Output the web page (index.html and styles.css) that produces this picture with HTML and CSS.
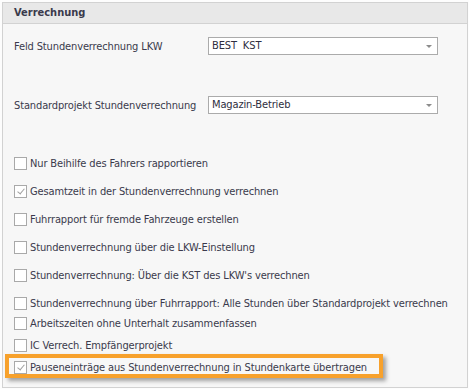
FILE: index.html
```html
<!DOCTYPE html>
<html lang="de">

<head>
    <meta charset="UTF-8">
    <meta name="viewport" content="width=device-width, initial-scale=1.0">
    <title>Verrechnung</title>
    <link rel="stylesheet" href="styles.css">
</head>

<body>
    <div class="panel">
        <div class="panel-header">Verrechnung</div>

        <div class="panel-body">
            <!-- Auswahlfelder -->
            <div class="field first">
                <label>Feld Stundenverrechnung LKW</label>
                <div class="combo">BEST&nbsp; KST<span class="arrow"></span></div>
            </div>
            <div class="field">
                <label>Standardprojekt Stundenverrechnung</label>
                <div class="combo">Magazin-Betrieb<span class="arrow"></span></div>
            </div>

            <!-- Optionen -->
            <div class="checks wide">
                <div class="check"><span class="box"></span>Nur Beihilfe des Fahrers rapportieren</div>
                <div class="check"><span class="box checked"></span>Gesamtzeit in der Stundenverrechnung verrechnen</div>
                <div class="check"><span class="box"></span>Fuhrrapport für fremde Fahrzeuge erstellen</div>
                <div class="check"><span class="box"></span>Stundenverrechnung über die LKW-Einstellung</div>
                <div class="check"><span class="box"></span>Stundenverrechnung: Über die KST des LKW's verrechnen</div>
                <div class="check"><span class="box"></span>Stundenverrechnung über Fuhrrapport: Alle Stunden über Standardprojekt verrechnen</div>
            </div>
            <div class="checks tight">
                <div class="check"><span class="box"></span>Arbeitszeiten ohne Unterhalt zusammenfassen</div>
                <div class="check"><span class="box"></span>IC Verrech. Empfängerprojekt</div>
                <div class="check highlight"><span class="box checked"></span>Pauseneinträge aus Stundenverrechnung in Stundenkarte übertragen</div>
            </div>
        </div>
    </div>
</body>

</html>
```

FILE: styles.css
```css
body {
    margin: 0;
    background-color: #FDFDFD;
    font-family: "DejaVu Sans Condensed", "Liberation Sans", sans-serif;
    font-size: 11px;
    color: #3A3A4C;
}

.panel {
    margin: 2px 0 0 2px;
    width: 464px;
    height: 384px;
    border: 1px solid #D2D2D2;
    background-color: #F7F7F7;
}

.panel-header {
    height: 20px;
    line-height: 20px;
    padding-left: 11px;
    background-color: #E8E8E8;
    border-bottom: 1px solid #D2D2D2;
    font-weight: bold;
    color: #3A3A4C;
}

.panel-body {
    padding-left: 11px;
    letter-spacing: -0.13px;
}

.field {
    display: flex;
    align-items: center;
    margin-top: 41px;
}

.field.first {
    margin-top: 13px;
}

.field label {
    width: 194px;
    white-space: nowrap;
}

.combo {
    position: relative;
    box-sizing: border-box;
    width: 230px;
    height: 18px;
    line-height: 16px;
    padding-left: 3px;
    background-color: #FFFFFF;
    border: 1px solid #ABABAB;
    color: #2E2E40;
}

.combo .arrow {
    position: absolute;
    right: 5px;
    top: 7px;
    width: 0;
    height: 0;
    border-left: 3px solid transparent;
    border-right: 3px solid transparent;
    border-top: 3px solid #8C8C8C;
}

.checks {
    display: flex;
    flex-direction: column;
}

.checks.wide {
    margin-top: 39px;
    gap: 8px;
}

.checks.tight {
    gap: 2px;
}

.check {
    position: relative;
    display: flex;
    align-items: center;
    height: 20px;
    white-space: nowrap;
}

.box {
    flex-shrink: 0;
    box-sizing: border-box;
    width: 13px;
    height: 13px;
    margin-right: 3px;
    background-color: #FFFFFF;
    border: 1px solid #A9A9A9;
    position: relative;
}

.box.checked::after {
    content: "";
    position: absolute;
    left: 4px;
    top: 1px;
    width: 3px;
    height: 6px;
    border-right: 1px solid #A0A0A0;
    border-bottom: 1px solid #A0A0A0;
    transform: rotate(40deg);
}

/* Orange Markierung */
.check.highlight::before {
    content: "";
    position: absolute;
    left: -9px;
    top: -3px;
    width: 370px;
    height: 16px;
    border: 4px solid #F7A12C;
    box-shadow: 3px 3px 4px rgba(0, 0, 0, 0.35);
}
```
